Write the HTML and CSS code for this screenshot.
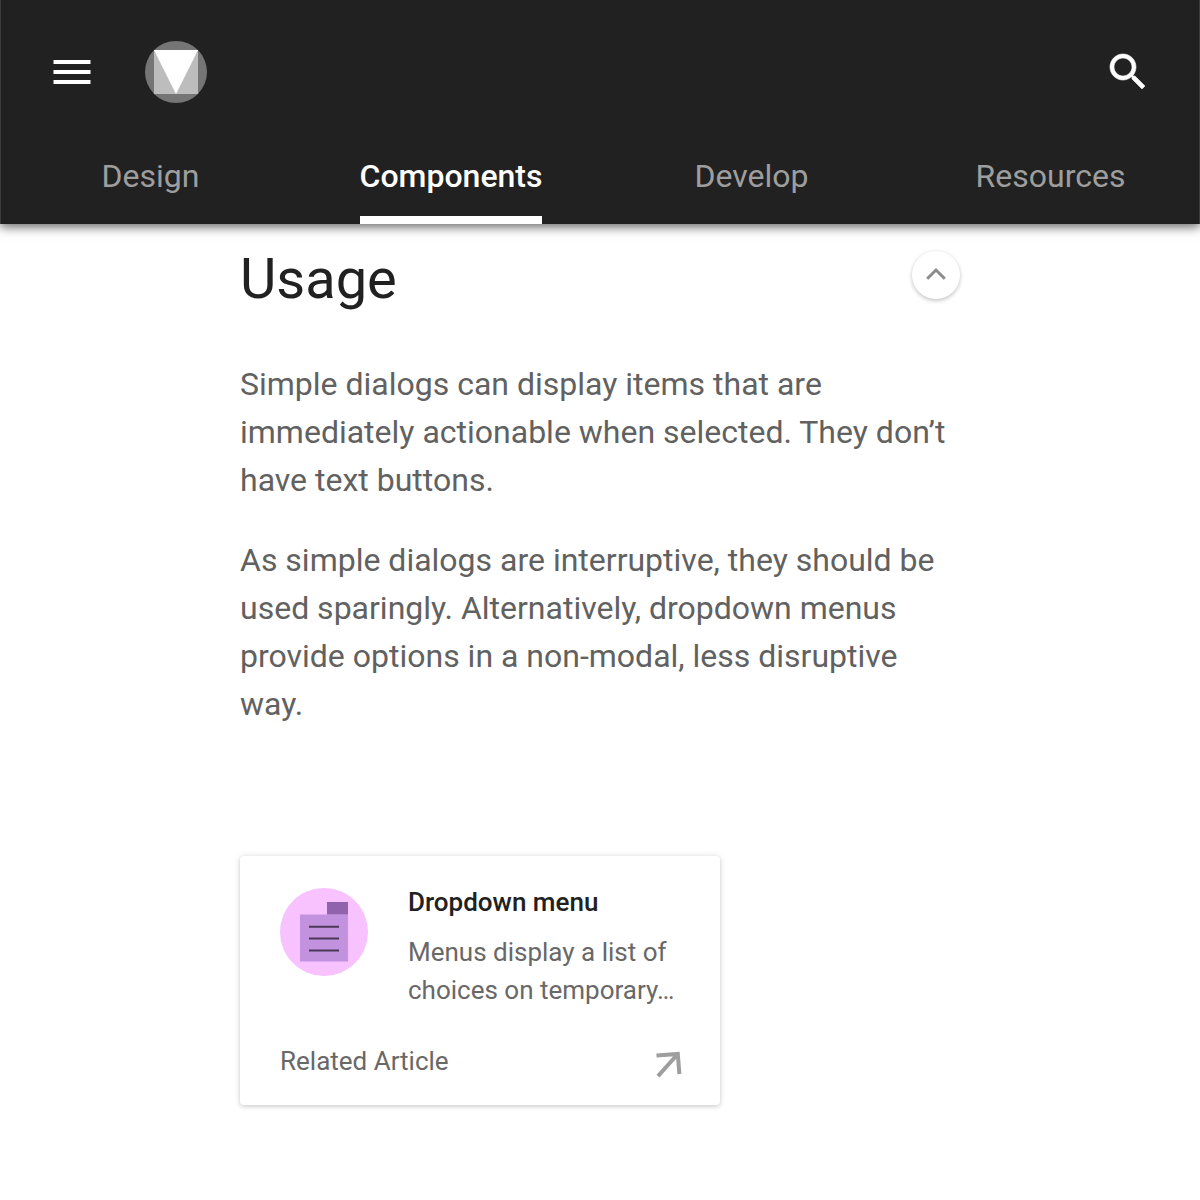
FILE: index.html
```html
<!DOCTYPE html>
<html lang="en">
<head>
<meta charset="utf-8">
<title>Dialogs</title>
<link rel="stylesheet" href="styles.css">
</head>
<body>
<header class="header">
  <div class="toolbar">
    <button class="icon-button" aria-label="Menu"><svg width="48" height="48" viewBox="0 0 48 48"><path fill="#fff" d="M5.500 12h37v4h-37zM5.500 22h37v4h-37zM5.500 32h37v4h-37z"/></svg></button>
    <a class="logo" aria-label="Home"><svg width="64" height="64" viewBox="0 0 64 64"><circle cx="32" cy="32" r="31" fill="#757575"/><path fill="#bdbdbd" d="M10 10h44v44H10z"/><path fill="#fff" d="M10 10h44L32 54z"/></svg></a>
    <button class="icon-button search" aria-label="Search"><svg width="48" height="48" viewBox="0 0 24 24"><path fill="#fff" stroke="#fff" stroke-width=".3" d="M15.500 14h-.79l-.28-.27C15.410 12.590 16 11.110 16 9.500 16 5.910 13.090 3 9.500 3S3 5.910 3 9.500 5.910 16 9.500 16c1.610 0 3.090-.59 4.230-1.570l.27.28v.79l5 4.990L20.490 19l-4.990-5zm-6 0C7.010 14 5 11.990 5 9.500S7.010 5 9.500 5 14 7.010 14 9.500 11.990 14 9.500 14z"/></svg></button>
  </div>
  <nav class="tabs">
    <a class="tab">Design</a>
    <a class="tab active">Components</a>
    <a class="tab">Develop</a>
    <a class="tab">Resources</a>
  </nav>
</header>
<main class="content">
  <div class="section-head">
    <h2 class="title">Usage</h2>
    <button class="collapse" aria-label="Collapse"><svg width="48" height="48" viewBox="0 0 48 48"><path d="M15.200 27.700 24 19l8.800 8.700" fill="none" stroke="#8c8c8c" stroke-width="3"/></svg></button>
  </div>
  <p class="text">Simple dialogs can display items that are immediately actionable when selected. They don’t have text buttons.</p>
  <p class="text">As simple dialogs are interruptive, they should be used sparingly. Alternatively, dropdown menus provide options in a non-modal, less disruptive way.</p>
  <article class="card">
    <div class="card-body">
      <svg class="thumb" width="88" height="88" viewBox="0 0 88 88"><circle cx="44" cy="44" r="44" fill="#f8c1ff"/><path fill="#c392df" d="M20 26.500h48V73.500H20z"/><path fill="#9163ac" d="M47 14h21v12.500H47z"/><path d="M29 38.700h30M29 50.600h30M29 62.500h30" stroke="#4b3856" stroke-width="2"/></svg>
      <div class="card-copy">
        <h3 class="card-title">Dropdown menu</h3>
        <p class="card-text">Menus display a list of<br>choices on temporary…</p>
      </div>
    </div>
    <div class="card-foot">
      <span>Related Article</span>
      <svg width="32" height="32" viewBox="0 0 32 32"><path d="M4.500 9.500 25.800 8 27.400 28M25.800 8 6 30.200" fill="none" stroke="#9e9e9e" stroke-width="4"/></svg>
    </div>
  </article>
</main>
</body>
</html>
```
FILE: styles.css
```css
* { box-sizing: border-box; }
body {
  margin: 0;
  height: 1200px;
  overflow: hidden;
  background: #fff;
  font-family: Roboto, sans-serif;
  color: #616161;
}
button { padding: 0; border: 0; background: none; }
svg { display: block; }
h2, h3, p { margin: 0; }
.header {
  height: 224px;
  background: #212121;
  border: 1px solid #3c3c3c;
  border-width: 0 1px;
  box-shadow: 0 3px 10px rgba(0, 0, 0, .6);
}
.toolbar {
  height: 144px;
  display: flex;
  align-items: center;
  padding: 0 47px;
}
.logo { margin-left: 48px; }
.search { margin-left: auto; }
.tabs {
  height: 80px;
  display: grid;
  grid-template-columns: 299px 302px 299px 299px;
  justify-items: center;
}
.tab {
  height: 80px;
  line-height: 64px;
  font-size: 32px;
  color: #9e9e9e;
}
.tab.active {
  color: #fff;
  font-weight: 500;
  border-bottom: 8px solid #fff;
}
.content { width: 720px; margin: 0 auto; }
.section-head {
  height: 104px;
  display: flex;
  justify-content: space-between;
}
.title {
  font-size: 56px;
  line-height: 110px;
  font-weight: 400;
  color: #212121;
}
.collapse {
  width: 48px;
  height: 48px;
  margin-top: 27px;
  border-radius: 50%;
  background: #fff;
  box-shadow: 0 2px 4px rgba(0, 0, 0, .2), 0 0 4px rgba(0, 0, 0, .06);
}
.text {
  font-size: 32px;
  line-height: 48px;
  margin-top: 32px;
}
.card {
  width: 480px;
  height: 249px;
  margin-top: 128px;
  padding: 32px 36px 0 40px;
  border-radius: 4px;
  background: #fff;
  box-shadow: 0 2px 4px rgba(0, 0, 0, .12), 0 0 6px rgba(0, 0, 0, .12);
  font-size: 26px;
}
.card-body { display: flex; gap: 40px; height: 152px; }
.card-copy { white-space: nowrap; }
.card-title {
  font-size: 26px;
  line-height: 28px;
  font-weight: 500;
  color: #212121;
}
.card-text { margin-top: 17px; line-height: 38px; color: #686868; }
.card-foot {
  display: flex;
  justify-content: space-between;
  line-height: 42px;
  color: #686868;
}
.card-foot svg { margin-top: 6px; }
```
